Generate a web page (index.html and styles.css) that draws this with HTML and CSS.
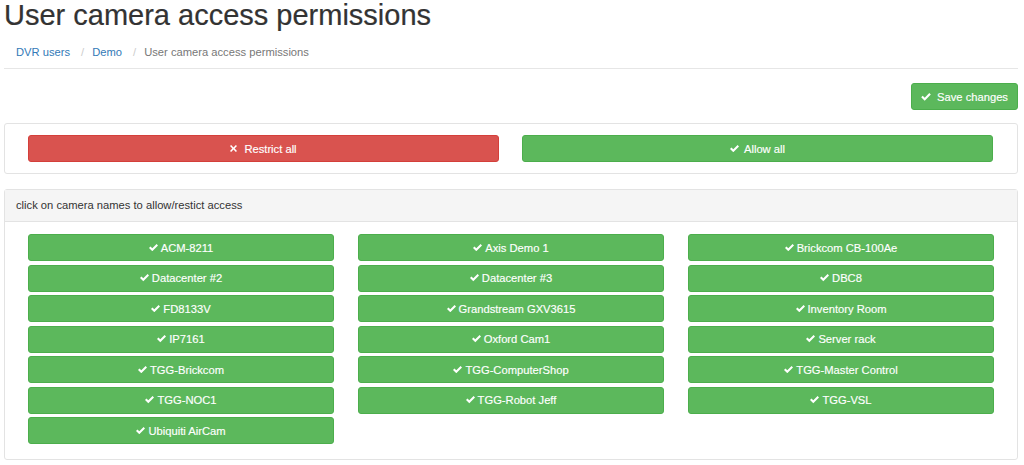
FILE: index.html
```html
<!DOCTYPE html>
<html>
<head>
<meta charset="utf-8">
<link rel="stylesheet" href="styles.css">
</head>
<body>
<div class="page">
  <h1 class="title">User camera access permissions</h1>
  <ol class="crumbs">
    <li><a href="#">DVR users</a></li>
    <li class="sep">/</li>
    <li><a href="#">Demo</a></li>
    <li class="sep">/</li>
    <li class="active">User camera access permissions</li>
  </ol>
  <div class="rule"></div>
  <div class="toolbar">
    <button class="btn btn-green btn-save"><svg class="ic-ok" viewBox="0 0 12 10"><polygon points="0,5.2 1.9,3.3 4.4,5.8 10.1,0.1 12,2 4.4,9.6"/></svg>Save changes</button>
  </div>
  <div class="panel">
    <div class="panel-body all-row">
      <button class="btn btn-red btn-wide"><svg class="ic-x" viewBox="0 0 10 10"><path d="M1.6 0 L5 3.4 L8.4 0 L10 1.6 L6.6 5 L10 8.4 L8.4 10 L5 6.6 L1.6 10 L0 8.4 L3.4 5 L0 1.6 Z"/></svg>Restrict all</button>
      <button class="btn btn-green btn-wide"><svg class="ic-ok" viewBox="0 0 12 10"><polygon points="0,5.2 1.9,3.3 4.4,5.8 10.1,0.1 12,2 4.4,9.6"/></svg>Allow all</button>
    </div>
  </div>
  <div class="panel panel-cams">
    <div class="panel-heading">click on camera names to allow/restict access</div>
    <div class="panel-body cams">
      <button class="btn btn-green cam"><svg class="ic-ok" viewBox="0 0 12 10"><polygon points="0,5.2 1.9,3.3 4.4,5.8 10.1,0.1 12,2 4.4,9.6"/></svg>ACM-8211</button>
      <button class="btn btn-green cam"><svg class="ic-ok" viewBox="0 0 12 10"><polygon points="0,5.2 1.9,3.3 4.4,5.8 10.1,0.1 12,2 4.4,9.6"/></svg>Axis Demo 1</button>
      <button class="btn btn-green cam"><svg class="ic-ok" viewBox="0 0 12 10"><polygon points="0,5.2 1.9,3.3 4.4,5.8 10.1,0.1 12,2 4.4,9.6"/></svg>Brickcom CB-100Ae</button>
      <button class="btn btn-green cam"><svg class="ic-ok" viewBox="0 0 12 10"><polygon points="0,5.2 1.9,3.3 4.4,5.8 10.1,0.1 12,2 4.4,9.6"/></svg>Datacenter #2</button>
      <button class="btn btn-green cam"><svg class="ic-ok" viewBox="0 0 12 10"><polygon points="0,5.2 1.9,3.3 4.4,5.8 10.1,0.1 12,2 4.4,9.6"/></svg>Datacenter #3</button>
      <button class="btn btn-green cam"><svg class="ic-ok" viewBox="0 0 12 10"><polygon points="0,5.2 1.9,3.3 4.4,5.8 10.1,0.1 12,2 4.4,9.6"/></svg>DBC8</button>
      <button class="btn btn-green cam"><svg class="ic-ok" viewBox="0 0 12 10"><polygon points="0,5.2 1.9,3.3 4.4,5.8 10.1,0.1 12,2 4.4,9.6"/></svg>FD8133V</button>
      <button class="btn btn-green cam"><svg class="ic-ok" viewBox="0 0 12 10"><polygon points="0,5.2 1.9,3.3 4.4,5.8 10.1,0.1 12,2 4.4,9.6"/></svg>Grandstream GXV3615</button>
      <button class="btn btn-green cam"><svg class="ic-ok" viewBox="0 0 12 10"><polygon points="0,5.2 1.9,3.3 4.4,5.8 10.1,0.1 12,2 4.4,9.6"/></svg>Inventory Room</button>
      <button class="btn btn-green cam"><svg class="ic-ok" viewBox="0 0 12 10"><polygon points="0,5.2 1.9,3.3 4.4,5.8 10.1,0.1 12,2 4.4,9.6"/></svg>IP7161</button>
      <button class="btn btn-green cam"><svg class="ic-ok" viewBox="0 0 12 10"><polygon points="0,5.2 1.9,3.3 4.4,5.8 10.1,0.1 12,2 4.4,9.6"/></svg>Oxford Cam1</button>
      <button class="btn btn-green cam"><svg class="ic-ok" viewBox="0 0 12 10"><polygon points="0,5.2 1.9,3.3 4.4,5.8 10.1,0.1 12,2 4.4,9.6"/></svg>Server rack</button>
      <button class="btn btn-green cam"><svg class="ic-ok" viewBox="0 0 12 10"><polygon points="0,5.2 1.9,3.3 4.4,5.8 10.1,0.1 12,2 4.4,9.6"/></svg>TGG-Brickcom</button>
      <button class="btn btn-green cam"><svg class="ic-ok" viewBox="0 0 12 10"><polygon points="0,5.2 1.9,3.3 4.4,5.8 10.1,0.1 12,2 4.4,9.6"/></svg>TGG-ComputerShop</button>
      <button class="btn btn-green cam"><svg class="ic-ok" viewBox="0 0 12 10"><polygon points="0,5.2 1.9,3.3 4.4,5.8 10.1,0.1 12,2 4.4,9.6"/></svg>TGG-Master Control</button>
      <button class="btn btn-green cam"><svg class="ic-ok" viewBox="0 0 12 10"><polygon points="0,5.2 1.9,3.3 4.4,5.8 10.1,0.1 12,2 4.4,9.6"/></svg>TGG-NOC1</button>
      <button class="btn btn-green cam"><svg class="ic-ok" viewBox="0 0 12 10"><polygon points="0,5.2 1.9,3.3 4.4,5.8 10.1,0.1 12,2 4.4,9.6"/></svg>TGG-Robot Jeff</button>
      <button class="btn btn-green cam"><svg class="ic-ok" viewBox="0 0 12 10"><polygon points="0,5.2 1.9,3.3 4.4,5.8 10.1,0.1 12,2 4.4,9.6"/></svg>TGG-VSL</button>
      <button class="btn btn-green cam"><svg class="ic-ok" viewBox="0 0 12 10"><polygon points="0,5.2 1.9,3.3 4.4,5.8 10.1,0.1 12,2 4.4,9.6"/></svg>Ubiquiti AirCam</button>
    </div>
  </div>
</div>
</body>
</html>
```
FILE: styles.css
```css
* { box-sizing: border-box; }
html, body { margin: 0; padding: 0; background: #fff; }
body {
  font-family: "Liberation Sans", Arial, Helvetica, sans-serif;
  font-size: 11.2px;
  color: #333;
}
.page {
  width: 1014px;
  margin-left: 4px;
}
.title {
  margin: 0;
  padding-top: 1px;
  font-size: 29px;
  font-weight: 500;
  line-height: 29px;
  color: #333;
  -webkit-text-stroke: 0.2px #333;
}
.crumbs {
  list-style: none;
  margin: 8px 0 0;
  padding: 6px 12px;
  display: flex;
  gap: 0;
  line-height: 16px;
  font-size: 11.2px;
}
.crumbs li { display: block; }
.crumbs a { color: #337ab7; text-decoration: none; }
.crumbs .sep { color: #ccc; padding: 0 8px 0 11px; }
.crumbs .active { color: #777; }
.rule {
  margin-top: 2px;
  border-top: 1px solid #e6e6e6;
}
.toolbar {
  display: flex;
  justify-content: flex-end;
  margin-top: 14px;
}
.btn {
  display: flex;
  align-items: center;
  justify-content: center;
  height: 27px;
  padding: 0 9px;
  border: 1px solid transparent;
  border-radius: 3px;
  font-family: inherit;
  font-size: 11.2px;
  color: #fff;
  -webkit-text-stroke: 0.15px #fff;
  cursor: pointer;
}
.btn-green { background: #5cb85c; border-color: #4cae4c; }
.btn-red { background: #d9534f; border-color: #d43f3a; }
.ic-ok { width: 9px; height: 7.5px; fill: #fff; margin-right: 3px; flex: none; }
.ic-x { width: 7px; height: 7px; fill: #fff; margin-right: 7px; flex: none; }
.btn-save { width: 107px; }
.btn-save .ic-ok { width: 10px; height: 8px; margin-right: 6px; }
.panel {
  margin-top: 13px;
  border: 1px solid #e3e3e3;
  border-radius: 3px;
  background: #fff;
}
.all-row {
  display: grid;
  grid-template-columns: 471px 471px;
  column-gap: 23px;
  padding: 11px 24px 11px 23px;
}
.btn-wide .ic-ok { margin-right: 5px; }
.panel-cams { margin-top: 15px; height: 271px; }
.panel-heading {
  background: #f5f5f5;
  border-bottom: 1px solid #e3e3e3;
  height: 32px;
  padding: 0 11px;
  line-height: 31px;
  color: #333;
}
.cams {
  display: grid;
  grid-template-columns: repeat(3, 306px);
  column-gap: 24px;
  row-gap: 3.5px;
  padding: 12px 23px 0;
}
```
